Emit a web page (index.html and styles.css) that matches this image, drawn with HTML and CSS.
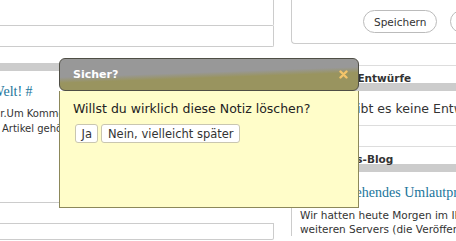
FILE: index.html
```html
<html lang="de">
<head>
    <meta charset="UTF-8">
    <title>Dashboard</title>
    <link rel="stylesheet" href="styles.css">
</head>
<body>
    <div class="wrap">
        <div class="main">
            <div class="field first"></div>
            <div class="field second"></div>
            <div class="comments">
                <h3 class="widget-bar"></h3>
                <p class="comment-meta"><a href="#">Hallo Welt!</a> <a href="#">#</a></p>
                <p class="comment-text">Kommentar.Um Kommentare zu löschen, melde dich an und sieh dir die zum Artikel gehörenden Kommentare an.</p>
            </div>
            <div class="field third"></div>
        </div>
        <div class="side">
            <div class="toolbar">
                <button class="pill">Speichern</button>
                <button class="pill">Veröffentlichen</button>
            </div>
            <div class="widget">
                <h3>Kürzliche Entwürfe</h3>
                <p class="note">Derzeit gibt es keine Entwürfe.</p>
            </div>
            <div class="widget">
                <h3>WordPress-Blog</h3>
                <a class="rss-title" href="#">Vorübergehendes Umlautproblem</a>
                <p class="rss-summary">Wir hatten heute Morgen im IRC eine Diskussion wegen eines weiteren Servers (die Veröffentlichung folgt).</p>
            </div>
        </div>
    </div>

    <div class="dialog">
        <div class="dialog-title">
            <span>Sicher?</span>
            <svg class="close" width="9" height="9" viewBox="0 0 9 9">
                <path d="M1.5 1.5L7.5 7.5M7.5 1.5L1.5 7.5" stroke="#f3c46a" stroke-width="2.4" stroke-linecap="round"/>
            </svg>
        </div>
        <div class="dialog-body">
            <p>Willst du wirklich diese Notiz löschen?</p>
            <div class="dialog-buttons">
                <button class="btn">Ja</button>
                <button class="btn">Nein, vielleicht später</button>
            </div>
        </div>
    </div>
</body>
</html>
```

FILE: styles.css
```css
html, body {
    margin: 0;
}
body {
    font-family: "DejaVu Sans", Verdana, sans-serif;
    font-size: 10px;
    color: #333;
    background: #fff;
    width: 456px;
    height: 241px;
    overflow: hidden;
    position: relative;
}
a {
    color: #21759b;
    text-decoration: none;
}
.wrap {
    display: flex;
}

/* left column */
.main {
    width: 274px;
    flex-shrink: 0;
}
.field {
    box-sizing: border-box;
    border-right: 1px solid #ccc;
    border-bottom: 1px solid #ccc;
    border-bottom-right-radius: 2px;
}
.field.first {
    height: 26px;
}
.field.second {
    height: 21px;
}
.field.third {
    height: 17px;
    margin-top: 20px;
    border-top: 1px solid #ccc;
}
.comments {
    height: 155px;
    border-bottom: 1px solid #ccc;
}
.widget-bar {
    margin: 0;
    height: 16px;
    border-bottom: 8px solid #ccc;
}
.comment-meta {
    margin: 12px 0 0;
    padding-left: 2px;
    font-family: "Liberation Serif", "Times New Roman", serif;
    font-size: 14px;
    line-height: 18px;
    text-indent: -45px;
}
.comment-text {
    margin: 5px -75px 0 0;
    padding-left: 2px;
    line-height: 15px;
    text-indent: -56px;
}

/* right column */
.side {
    width: 350px;
    flex-shrink: 0;
    margin-left: 17px;
}
.toolbar {
    box-sizing: border-box;
    height: 44px;
    border-left: 1px solid #ccc;
    border-bottom: 1px solid #ccc;
    border-bottom-left-radius: 4px;
    display: flex;
    gap: 13px;
    padding: 10px 0 0 71px;
}
.pill {
    height: 23px;
    flex-shrink: 0;
    border: 1px solid #bbb;
    border-radius: 12px;
    background: #fff;
    padding: 0 10px;
    font-family: "DejaVu Sans", Verdana, sans-serif;
    font-size: 10.5px;
    color: #333;
}
.widget {
    margin-top: 21px;
    border-top: 1px solid #ddd;
    border-bottom: 1px solid #ddd;
}
.widget + .widget {
    margin-top: 20px;
    border-bottom: 0;
}
.widget h3 {
    margin: 0;
    padding: 8px 0 0 8px;
    font-size: 10.5px;
    line-height: 9px;
    border-bottom: 8px solid #ccc;
}
.note {
    margin: 10px 0 8px;
    padding-left: 9px;
    font-size: 12.5px;
    line-height: 16px;
}
.rss-title {
    display: block;
    margin-top: 12px;
    padding-left: 13px;
    font-family: "Liberation Serif", "Times New Roman", serif;
    font-size: 14px;
    line-height: 17px;
}
.rss-summary {
    margin: 4px 0 0;
    border-left: 1px solid #ccc;
    padding: 3px 0 0 8px;
    font-size: 10.5px;
    line-height: 14px;
}

/* confirm dialog */
.dialog {
    position: absolute;
    left: 59px;
    top: 58px;
    width: 300px;
}
.dialog-title {
    box-sizing: border-box;
    height: 33px;
    border: 1px solid #4f4e45;
    border-radius: 6px;
    background: linear-gradient(178deg, #989898 0%, #989898 44%, #99945f 58%, #99945f 100%);
    color: #fff;
    font-weight: bold;
    font-size: 11px;
    display: flex;
    align-items: center;
    justify-content: space-between;
    padding: 0 10px 0 13px;
}
.dialog-body {
    box-sizing: border-box;
    height: 117px;
    background: #fffdc9;
    border: 1px solid #8c885a;
    border-top: 0;
    padding: 10px 13px;
    color: #222;
}
.dialog-body p {
    margin: 0;
    font-size: 12.5px;
    line-height: 16px;
}
.dialog-buttons {
    display: flex;
    gap: 3px;
    margin: 7px 0 0 2px;
}
.btn {
    height: 19px;
    border: 1px solid #c9c6b0;
    border-radius: 3px;
    background: #fff;
    padding: 0 5.5px;
    font-family: "DejaVu Sans", Verdana, sans-serif;
    font-size: 11.5px;
    color: #333;
}
```
